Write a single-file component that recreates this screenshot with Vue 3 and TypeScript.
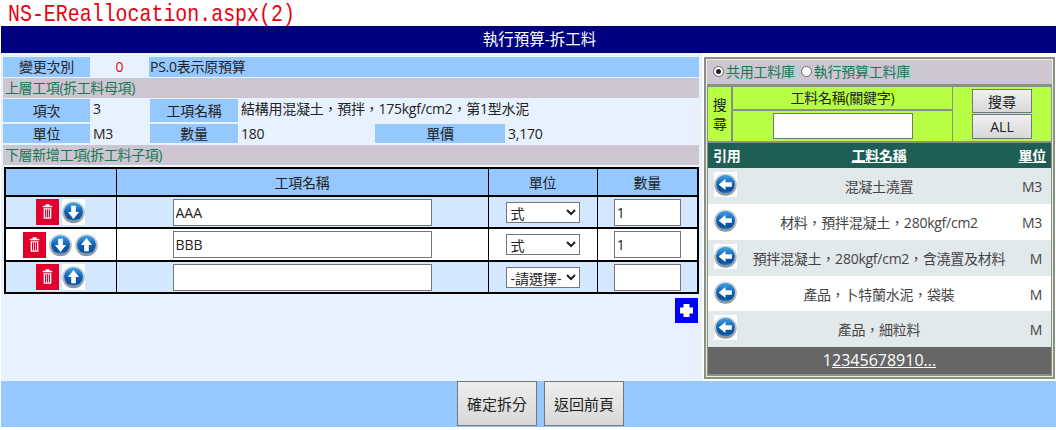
<template>
  <div class="page">
    <svg class="defs" width="0" height="0">
      <defs>
        <linearGradient id="ballFill" x1="0" y1="0" x2="0" y2="1">
          <stop offset="0" stop-color="#4aa6e6" />
          <stop offset="0.5" stop-color="#0f62b4" />
          <stop offset="0.85" stop-color="#0a4f9e" />
          <stop offset="1" stop-color="#3a90d6" />
        </linearGradient>
        <linearGradient id="ringFill" x1="0" y1="0" x2="0" y2="1">
          <stop offset="0" stop-color="#e4e8ea" />
          <stop offset="1" stop-color="#8b9297" />
        </linearGradient>
        <symbol id="ball-left" viewBox="0 0 24 24">
          <circle cx="12" cy="12" r="11.8" fill="url(#ringFill)" />
          <circle cx="12" cy="11.6" r="9.8" fill="url(#ballFill)" />
          <path d="M4.8 12 L12 6.2 V9.6 H18.6 V14.4 H12 V17.8 Z" fill="#fff" />
        </symbol>
        <symbol id="ball-down" viewBox="0 0 24 24">
          <circle cx="12" cy="12" r="11.8" fill="url(#ringFill)" />
          <circle cx="12" cy="11.6" r="9.8" fill="url(#ballFill)" />
          <path d="M12 19.2 L6.2 12 H9.6 V5.4 H14.4 V12 H17.8 Z" fill="#fff" />
        </symbol>
        <symbol id="ball-up" viewBox="0 0 24 24">
          <circle cx="12" cy="12" r="11.8" fill="url(#ringFill)" />
          <circle cx="12" cy="11.6" r="9.8" fill="url(#ballFill)" />
          <path d="M12 4.6 L17.8 12 H14.4 V18.6 H9.6 V12 H6.2 Z" fill="#fff" />
        </symbol>
      </defs>
    </svg>

    <div class="title">NS-EReallocation.aspx(2)</div>
    <div class="head">執行預算-拆工料</div>

    <div class="main">
      <div class="left">
        <div class="row r1">
          <div class="lab w1">變更次別</div>
          <div class="zero">0</div>
          <div class="note">PS.0表示原預算</div>
        </div>
        <div class="bar">上層工項(拆工料母項)</div>
        <div class="row r2">
          <div class="lab w1">項次</div>
          <div class="val v1">3</div>
          <div class="lab w2">工項名稱</div>
          <div class="val">結構用混凝土，預拌，175kgf/cm2，第1型水泥</div>
        </div>
        <div class="row r3">
          <div class="lab w1">單位</div>
          <div class="val v1">M3</div>
          <div class="lab w2">數量</div>
          <div class="val v2">180</div>
          <div class="lab w3">單價</div>
          <div class="val">3,170</div>
        </div>
        <div class="bar">下層新增工項(拆工料子項)</div>

        <table class="grid">
          <colgroup>
            <col style="width: 111px" />
            <col style="width: 372px" />
            <col style="width: 109px" />
            <col />
          </colgroup>
          <thead>
            <tr>
              <th></th>
              <th>工項名稱</th>
              <th>單位</th>
              <th>數量</th>
            </tr>
          </thead>
          <tbody>
            <tr v-for="(item, i) in items" :key="i" :class="{ alt: i % 2 === 1 }">
              <td>
                <div class="acts">
                  <span class="trash">
                    <svg viewBox="0 0 24 26" width="23" height="26">
                      <path d="M7 6.5 H10 V5 H14 V6.5 H17 V8 H7 Z" fill="#fff" />
                      <path d="M8 9 H16 V20 H8 Z M9.4 10.2 V18.8 H10.6 V10.2 Z M11.4 10.2 V18.8 H12.6 V10.2 Z M13.4 10.2 V18.8 H14.6 V10.2 Z" fill="#fff" fill-rule="evenodd" />
                    </svg>
                  </span>
                  <svg v-if="item.down" class="ball"><use href="#ball-down" /></svg>
                  <svg v-if="item.up" class="ball"><use href="#ball-up" /></svg>
                </div>
              </td>
              <td class="c"><input class="txt name" :value="item.name" /></td>
              <td class="c">
                <select class="sel">
                  <option>{{ item.unit }}</option>
                </select>
              </td>
              <td class="c"><input class="txt qty" :value="item.qty" /></td>
            </tr>
          </tbody>
        </table>
        <div class="addrow">
          <span class="add">
            <svg viewBox="0 0 23 25" width="23" height="25">
              <path d="M8.5 6 H14.5 V9.5 H18 V15.5 H14.5 V19 H8.5 V15.5 H5 V9.5 H8.5 Z" fill="#fff" />
            </svg>
          </span>
        </div>
      </div>

      <div class="right">
        <div class="radios">
          <span class="dot on"></span>共用工料庫
          <span class="dot sec"></span>執行預算工料庫
        </div>
        <div class="search">
          <div class="sl">搜<br />尋</div>
          <div class="sm">
            <div class="skey">工料名稱(關鍵字)</div>
            <div class="sinp"><input class="txt kw" /></div>
          </div>
          <div class="sb">
            <button class="bt b1">搜尋</button>
            <button class="bt">ALL</button>
          </div>
        </div>
        <div class="lib">
          <div class="lhead">
            <span class="lc1">引用</span>
            <a class="lc2">工料名稱</a>
            <a class="lc3">單位</a>
          </div>
          <div v-for="(m, i) in mats" :key="i" class="lrow" :class="{ shade: i % 2 === 0 }">
            <span class="lc1"><svg class="ball wide"><use href="#ball-left" /></svg></span>
            <span class="lc2">{{ m.name }}</span>
            <span class="lc3 u">{{ m.unit }}</span>
          </div>
          <div class="pager">1<a v-for="p in pages" :key="p">{{ p }}</a></div>
        </div>
      </div>
    </div>

    <div class="foot">
      <button class="big">確定拆分</button>
      <button class="big">返回前頁</button>
    </div>
  </div>
</template>

<script setup lang="ts">
interface Item {
  name: string
  unit: string
  qty: string
  down: boolean
  up: boolean
}

const items: Item[] = [
  { name: 'AAA', unit: '式', qty: '1', down: true, up: false },
  { name: 'BBB', unit: '式', qty: '1', down: true, up: true },
  { name: '', unit: '-請選擇-', qty: '', down: false, up: true }
]

const mats = [
  { name: '混凝土澆置', unit: 'M3' },
  { name: '材料，預拌混凝土，280kgf/cm2', unit: 'M3' },
  { name: '預拌混凝土，280kgf/cm2，含澆置及材料', unit: 'M' },
  { name: '產品，卜特蘭水泥，袋裝', unit: 'M' },
  { name: '產品，細粒料', unit: 'M' }
]

const pages = ['2', '3', '4', '5', '6', '7', '8', '9', '10', '...']
</script>

<style>
html,
body {
  margin: 0;
  background: #fff;
}
</style>

<style scoped>
.page {
  width: 1056px;
  height: 430px;
  overflow: hidden;
  font-family: "Open Sans", "Noto Sans CJK TC", sans-serif;
  font-size: 14px;
  letter-spacing: -0.25px;
  color: #222;
}
.defs {
  position: absolute;
}
.title {
  height: 26px;
  line-height: 29px;
  padding-left: 8px;
  font-family: "Liberation Mono", monospace;
  font-size: 24px;
  letter-spacing: 0;
  color: #e8000f;
  transform: scaleX(0.83);
  transform-origin: 8px 0;
}
.head {
  height: 27px;
  line-height: 27px;
  margin-left: 1px;
  padding-left: 22px;
  background: #000080;
  color: #fff;
  text-align: center;
  font-size: 15.5px;
  letter-spacing: 0;
}
.main {
  display: grid;
  grid-template-columns: 702px 354px;
  height: 328px;
}
.left {
  margin-left: 1px;
  padding: 4px 3px 0 2px;
  background: #e8f2ff;
  box-sizing: border-box;
}
.row {
  display: flex;
  line-height: 20px;
}
.r1 {
  height: 20px;
  margin-bottom: 1px;
}
.r2 {
  height: 23px;
  margin: 1px 0 2px;
}
.r3 {
  height: 19px;
  margin-bottom: 2px;
}
.lab {
  background: #94c8ff;
  text-align: center;
}
.w1 {
  width: 87px;
}
.w2 {
  width: 88px;
}
.w3 {
  width: 130px;
}
.r2 .lab {
  line-height: 24px;
}
.val {
  padding-left: 3px;
}
.v1 {
  width: 57px;
}
.v2 {
  width: 134px;
}
.zero {
  width: 59px;
  text-align: center;
  color: #e60012;
}
.note {
  flex: 1;
  background: #94c8ff;
  padding-left: 1px;
}
.bar {
  height: 20px;
  line-height: 20px;
  padding-left: 2px;
  background: #cdc5d2;
  color: #157a52;
  letter-spacing: -0.4px;
}
.grid {
  width: 695px;
  margin: 2px 0 0 1px;
  border-collapse: collapse;
  table-layout: fixed;
  border: 2px solid #000;
}
.grid th {
  height: 26px;
  padding: 0;
  background: #94c8ff;
  font-weight: 400;
  border: 1px solid #000;
}
.grid td {
  height: 30px;
  padding: 0;
  background: #d3e8ff;
  border-left: 1px solid #000;
  border-right: 1px solid #000;
  border-top: 2px solid #000;
  border-bottom: 2px solid #000;
}
.grid tr.alt td {
  background: #fff;
  height: 31px;
}
.c {
  text-align: center;
}
.acts {
  display: flex;
  justify-content: center;
  align-items: center;
  gap: 3px;
}
.trash {
  display: flex;
  width: 23px;
  height: 26px;
  background: #e0002b;
}
.ball {
  width: 23px;
  height: 26px;
  background: #fff;
}
.wide {
  display: block;
  width: 23px;
  height: 25px;
}
.txt {
  box-sizing: border-box;
  height: 27px;
  padding: 1px 2px;
  border: 1px solid #767676;
  background: #fff;
  font-family: inherit;
  font-size: 14px;
  color: #222;
  vertical-align: middle;
}
.name {
  width: 259px;
}
.qty {
  width: 67px;
}
.kw {
  width: 140px;
  height: 26px;
}
.sel {
  box-sizing: border-box;
  width: 74px;
  height: 21px;
  border: 1px solid #767676;
  background: #fff;
  font-family: inherit;
  font-size: 14px;
  color: #222;
  vertical-align: middle;
}
.addrow {
  display: flex;
  justify-content: flex-end;
  margin: 4px 1px 0 0;
}
.add {
  display: flex;
  width: 23px;
  height: 25px;
  background: #0000ff;
}
.right {
  box-sizing: border-box;
  height: 322px;
  margin: 4px 0 0 2px;
  width: 351px;
  border: 2px solid #8a8f88;
  outline: 1px solid #e8f0d8;
  outline-offset: -3px;
  background: #8a8f88;
  padding: 0 2px;
}
.radios {
  height: 25px;
  line-height: 25px;
  margin: 0 -2px;
  padding-left: 7px;
  background: #cdc5d2;
  color: #157a52;
  display: flex;
  align-items: center;
}
.dot {
  width: 11px;
  height: 11px;
  box-sizing: border-box;
  border: 1px solid #666;
  border-radius: 50%;
  background: #fff;
  margin-right: 2px;
  position: relative;
}
.sec {
  margin-left: 6px;
}
.on::after {
  content: "";
  position: absolute;
  left: 2px;
  top: 2px;
  width: 5px;
  height: 5px;
  border-radius: 50%;
  background: #222;
}
.search {
  display: grid;
  grid-template-columns: 25px 220px 1fr;
  height: 54px;
  margin-top: 3px;
  background: #b6ff45;
}
.sl {
  display: flex;
  align-items: center;
  text-align: center;
  justify-content: center;
  line-height: 19px;
  border-right: 2px solid #8a8f88;
}
.sm {
  border-right: 1px solid #8a8f88;
  display: flex;
  flex-direction: column;
}
.skey {
  box-sizing: border-box;
  height: 24px;
  line-height: 22px;
  text-align: center;
  border-bottom: 2px solid #8a8f88;
}
.sinp {
  flex: 1;
  display: flex;
  justify-content: center;
  align-items: center;
}
.sb {
  display: flex;
  flex-direction: column;
  align-items: center;
  padding: 2px 0 0 0;
  gap: 1px;
}
.bt {
  box-sizing: border-box;
  width: 60px;
  height: 25px;
  padding: 0;
  border: 1px solid #767676;
  background: linear-gradient(#f0f0f0, #d8d8d8);
  font-family: inherit;
  font-size: 14px;
  color: #222;
}
.b1 {
  height: 24px;
}
.lib {
  margin-top: 2px;
  background: #fff;
}
.lhead {
  display: flex;
  height: 25px;
  line-height: 25px;
  background: #1e5e55;
  color: #fff;
  font-weight: 700;
}
.lhead a {
  text-decoration: underline;
}
.lc1 {
  width: 36px;
  flex: none;
  padding-left: 5px;
  box-sizing: border-box;
}
.lc2 {
  flex: 1;
  text-align: center;
}
.lc3 {
  width: 37px;
  flex: none;
  text-align: right;
  padding-right: 5px;
  box-sizing: border-box;
}
.lrow {
  display: flex;
  height: 36px;
  line-height: 37px;
  color: #444;
}
.lrow:nth-child(5) {
  height: 35px;
}
.lrow .lc1 {
  padding-left: 6px;
  padding-top: 4px;
  line-height: 0;
}
.u {
  padding-right: 9px;
}
.shade {
  background: #e2e9eb;
}
.pager {
  height: 27px;
  line-height: 27px;
  background: #666;
  color: #fff;
  text-align: center;
  font-size: 16px;
  letter-spacing: 0;
}
.pager a {
  text-decoration: underline;
}
.foot {
  display: flex;
  gap: 7px;
  height: 46px;
  margin-left: 1px;
  padding-left: 456px;
  background: #94c8ff;
  box-sizing: border-box;
}
.big {
  width: 80px;
  height: 45px;
  padding: 0;
  border: 1px solid #767676;
  background: linear-gradient(#eeeeee, #d8d8d8);
  font-family: inherit;
  font-size: 15px;
  letter-spacing: 0;
  color: #222;
}
</style>
